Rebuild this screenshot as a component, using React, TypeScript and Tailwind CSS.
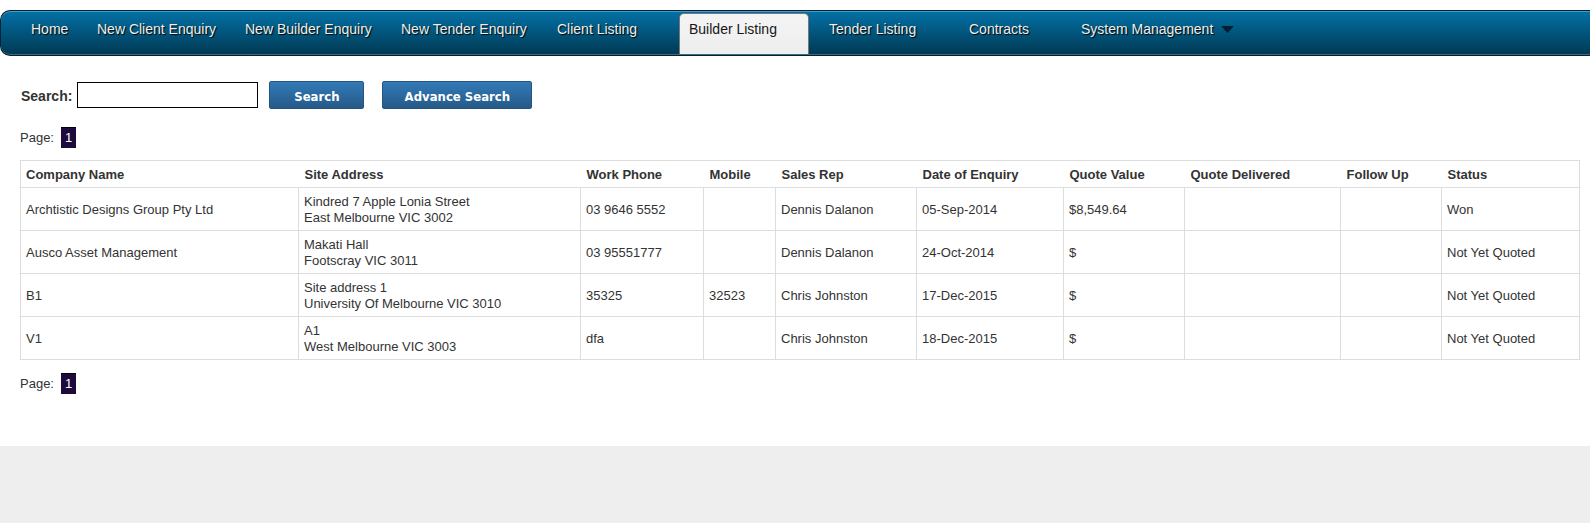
const NAV_ITEMS = [
  { label: "Home", width: "w-14" },
  { label: "New Client Enquiry", width: "w-[138px]" },
  { label: "New Builder Enquiry", width: "w-[146px]" },
  { label: "New Tender Enquiry", width: "w-[146px]" },
  { label: "Client Listing", width: "w-[122px]" },
  { label: "Builder Listing", width: "w-[130px]", active: true },
  { label: "Tender Listing", width: "w-[130px]" },
  { label: "Contracts", width: "w-[102px]" },
  { label: "System Management", width: "", menu: true },
];

const COLUMNS = [
  { title: "Company Name", width: "w-[278px]" },
  { title: "Site Address", width: "w-[282px]" },
  { title: "Work Phone", width: "w-[123px]" },
  { title: "Mobile", width: "w-[72px]" },
  { title: "Sales Rep", width: "w-[141px]" },
  { title: "Date of Enquiry", width: "w-[147px]" },
  { title: "Quote Value", width: "w-[121px]" },
  { title: "Quote Delivered", width: "w-[156px]" },
  { title: "Follow Up", width: "w-[101px]" },
  { title: "Status", width: "" },
];

const ROWS = [
  ["Archtistic Designs Group Pty Ltd", "Kindred 7 Apple Lonia Street\nEast Melbourne VIC 3002", "03 9646 5552", "", "Dennis Dalanon", "05-Sep-2014", "$8,549.64", "", "", "Won"],
  ["Ausco Asset Management", "Makati Hall\nFootscray VIC 3011", "03 95551777", "", "Dennis Dalanon", "24-Oct-2014", "$", "", "", "Not Yet Quoted"],
  ["B1", "Site address 1\nUniversity Of Melbourne VIC 3010", "35325", "32523", "Chris Johnston", "17-Dec-2015", "$", "", "", "Not Yet Quoted"],
  ["V1", "A1\nWest Melbourne VIC 3003", "dfa", "", "Chris Johnston", "18-Dec-2015", "$", "", "", "Not Yet Quoted"],
];

function NavBar() {
  return (
    <nav className="rounded-l-[10px] border border-r-0 border-[#002232] bg-linear-to-b from-[#0272a7] to-[#013953] shadow-[inset_0_1px_0_#4c9ac0,inset_0_-1px_0_#40697c]">
      <ul className="flex h-11 items-stretch pt-[2px] pb-px pl-5">
        {NAV_ITEMS.map((item) => (
          <li
            key={item.label}
            className={`${item.width} shrink-0 ${
              item.active
                ? "mr-[10px] rounded-t-[5px] border border-b-0 border-[#777777] bg-linear-to-b from-[#f4f4f4] to-[#eeeeee] px-[9px]"
                : item.menu
                  ? "border-t border-transparent px-[10px]"
                  : "mr-[10px] border-t border-transparent px-[10px]"
            }`}
          >
            <a
              href="#"
              className={`flex items-center pt-[5px] text-sm leading-5 whitespace-nowrap ${
                item.active ? "text-[#161616]" : "text-[#eeeeee] [text-shadow:1px_1px_1px_#000]"
              }`}
            >
              {item.label}
              {item.menu && (
                <svg className="ml-2 h-[7px] w-[13px]" viewBox="0 0 13 7" aria-hidden="true">
                  <path d="M0 0h13L6.500 7z" fill="#02202f" />
                </svg>
              )}
            </a>
          </li>
        ))}
      </ul>
    </nav>
  );
}

function Button({ children, width }: { children: string; width: string }) {
  return (
    <button
      type="button"
      className={`h-7 ${width} rounded-[2px] border border-[#245582] bg-linear-to-b from-[#337ab7] to-[#265a88] pt-[3px] font-['DejaVu_Sans_Condensed','DejaVu_Sans',sans-serif] text-[13px] leading-4 font-bold text-white`}
    >
      {children}
    </button>
  );
}

function Pager() {
  return (
    <div className="flex h-[21px] items-center gap-[7px] text-[13px]">
      <span>Page:</span>
      <a href="#" aria-current="page" className="border-t border-black bg-[#1d0b3d] px-1 py-[2px] leading-4 text-white">
        1
      </a>
    </div>
  );
}

export default function App() {
  return (
    <div className="min-h-screen bg-[#eeeeee] font-['Liberation_Sans',Arial,sans-serif] text-[#333333]">
      <div className="bg-white pt-[10px] pb-[52px]">
        <NavBar />
        <main className="pt-[25px] pr-[10px] pl-5">
          <form className="flex items-center" onSubmit={(e) => e.preventDefault()}>
            <label htmlFor="search" className="mr-[5px] pt-[2px] pl-px text-sm font-bold">
              Search:
            </label>
            <input id="search" type="text" className="mr-[11px] h-[26px] w-[181px] border border-black bg-white px-1 text-[13px]" />
            <div className="flex gap-[18px]">
              <Button width="w-[95px]">Search</Button>
              <Button width="w-[150px]">Advance Search</Button>
            </div>
          </form>
          <div className="pt-[18px] pb-3">
            <Pager />
          </div>
          <table className="w-full table-fixed border-collapse border border-[#dddddd] text-left text-[13px] leading-4">
            <thead>
              <tr>
                {COLUMNS.map((c) => (
                  <th key={c.title} scope="col" className={`${c.width} pt-[6px] pr-1 pb-1 pl-[6px] font-bold whitespace-nowrap first:pl-[5px]`}>
                    {c.title}
                  </th>
                ))}
              </tr>
            </thead>
            <tbody>
              {ROWS.map((row) => (
                <tr key={row[0]}>
                  {row.map((cell, i) => (
                    <td key={i} className="border border-[#dddddd] px-[5px] pt-[6px] pb-1 align-middle whitespace-pre-line">
                      {cell}
                    </td>
                  ))}
                </tr>
              ))}
            </tbody>
          </table>
          <div className="pt-[13px]">
            <Pager />
          </div>
        </main>
      </div>
    </div>
  );
}
